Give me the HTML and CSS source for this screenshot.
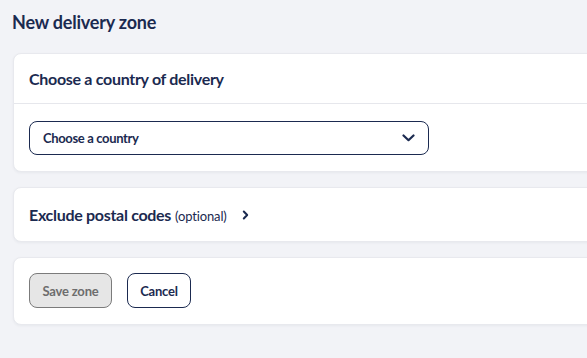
FILE: index.html
```html
<!DOCTYPE html>
<html lang="en">
<head>
<meta charset="utf-8">
<title>New delivery zone</title>
<link rel="stylesheet" href="styles.css">
</head>
<body>
<main class="page">
  <h1 class="title">New delivery zone</h1>

  <section class="card">
    <div class="card-header">
      <h2 class="card-title">Choose a country of delivery</h2>
    </div>
    <div class="card-body">
      <button class="select" type="button">
        <span class="select-label">Choose a country</span>
        <svg class="select-chevron" width="13" height="8" viewBox="0 0 13 8" aria-hidden="true">
          <path d="M1.5 1.5 L6.5 6.2 L11.5 1.5" fill="none" stroke="#1b2a50" stroke-width="2.2" stroke-linecap="round" stroke-linejoin="round"/>
        </svg>
      </button>
    </div>
  </section>

  <section class="card card-collapsed">
    <div class="toggle">
      <span class="card-title">Exclude postal codes</span>
      <span class="optional">(optional)</span>
      <svg class="toggle-chevron" width="7" height="10" viewBox="0 0 7 10" aria-hidden="true">
        <path d="M1.8 1.5 L5.2 5 L1.8 8.5" fill="none" stroke="#1b2a50" stroke-width="2" stroke-linecap="round" stroke-linejoin="round"/>
      </svg>
    </div>
  </section>

  <section class="card card-actions">
    <button class="btn btn-disabled" type="button">Save zone</button>
    <button class="btn btn-outline" type="button">Cancel</button>
  </section>
</main>
</body>
</html>
```

FILE: styles.css
```css
html, body {
  margin: 0;
  padding: 0;
}

body {
  background: #f2f3f7;
  font-family: Lato, "Liberation Sans", sans-serif;
  color: #1b2a50;
  overflow: hidden;
  width: 587px;
  height: 358px;
}

.page {
  padding: 10px 0 0 13px;
  display: flex;
  flex-direction: column;
  width: 640px;
}

.title {
  margin: 0 0 19px -1px;
  font-size: 18px;
  line-height: 24px;
  font-weight: 700;
  letter-spacing: -0.2px;
}

.card {
  background: #ffffff;
  border: 1px solid #e8e9ee;
  border-radius: 8px;
  box-shadow: 0 1px 3px rgba(20, 30, 60, 0.05);
  box-sizing: border-box;
}

.card + .card {
  margin-top: 15px;
}

.card-header {
  padding: 15px 15px 14px;
  border-bottom: 1px solid #e6e7ec;
}

.card-title {
  margin: 0;
  font-size: 16px;
  line-height: 20px;
  font-weight: 700;
  letter-spacing: -0.3px;
}

.card-body {
  padding: 17px 15px 16px;
}

.select {
  display: flex;
  align-items: center;
  justify-content: space-between;
  width: 400px;
  height: 34px;
  padding: 0 13px 0 13px;
  box-sizing: border-box;
  background: #ffffff;
  border: 1.5px solid #1b2a50;
  border-radius: 8px;
  font-family: inherit;
  color: #1b2a50;
  cursor: pointer;
}

.select-label {
  font-size: 13px;
  font-weight: 700;
  letter-spacing: -0.35px;
}

.select-chevron {
  display: block;
}

.card-collapsed {
  height: 55px;
}

.toggle {
  display: flex;
  align-items: center;
  padding: 17px 15px 16px;
}

.optional {
  font-size: 13px;
  font-weight: 400;
  margin-left: 4px;
  position: relative;
  top: 1px;
  letter-spacing: -0.15px;
}

.toggle-chevron {
  display: block;
  margin-left: 15px;
}

.card-actions {
  display: flex;
  gap: 15px;
  padding: 15px 15px 16px;
}

.btn {
  height: 35px;
  padding: 0;
  border-radius: 8px;
  font-family: inherit;
  font-size: 13px;
  font-weight: 700;
  box-sizing: border-box;
  white-space: nowrap;
  letter-spacing: -0.2px;
}

.btn-disabled {
  width: 83px;
  background: #e6e6e6;
  border: 1px solid #7b7b7b;
  color: #6d6d6d;
}

.btn-outline {
  width: 64px;
  background: #ffffff;
  border: 1.5px solid #1b2a50;
  color: #1b2a50;
}
```
